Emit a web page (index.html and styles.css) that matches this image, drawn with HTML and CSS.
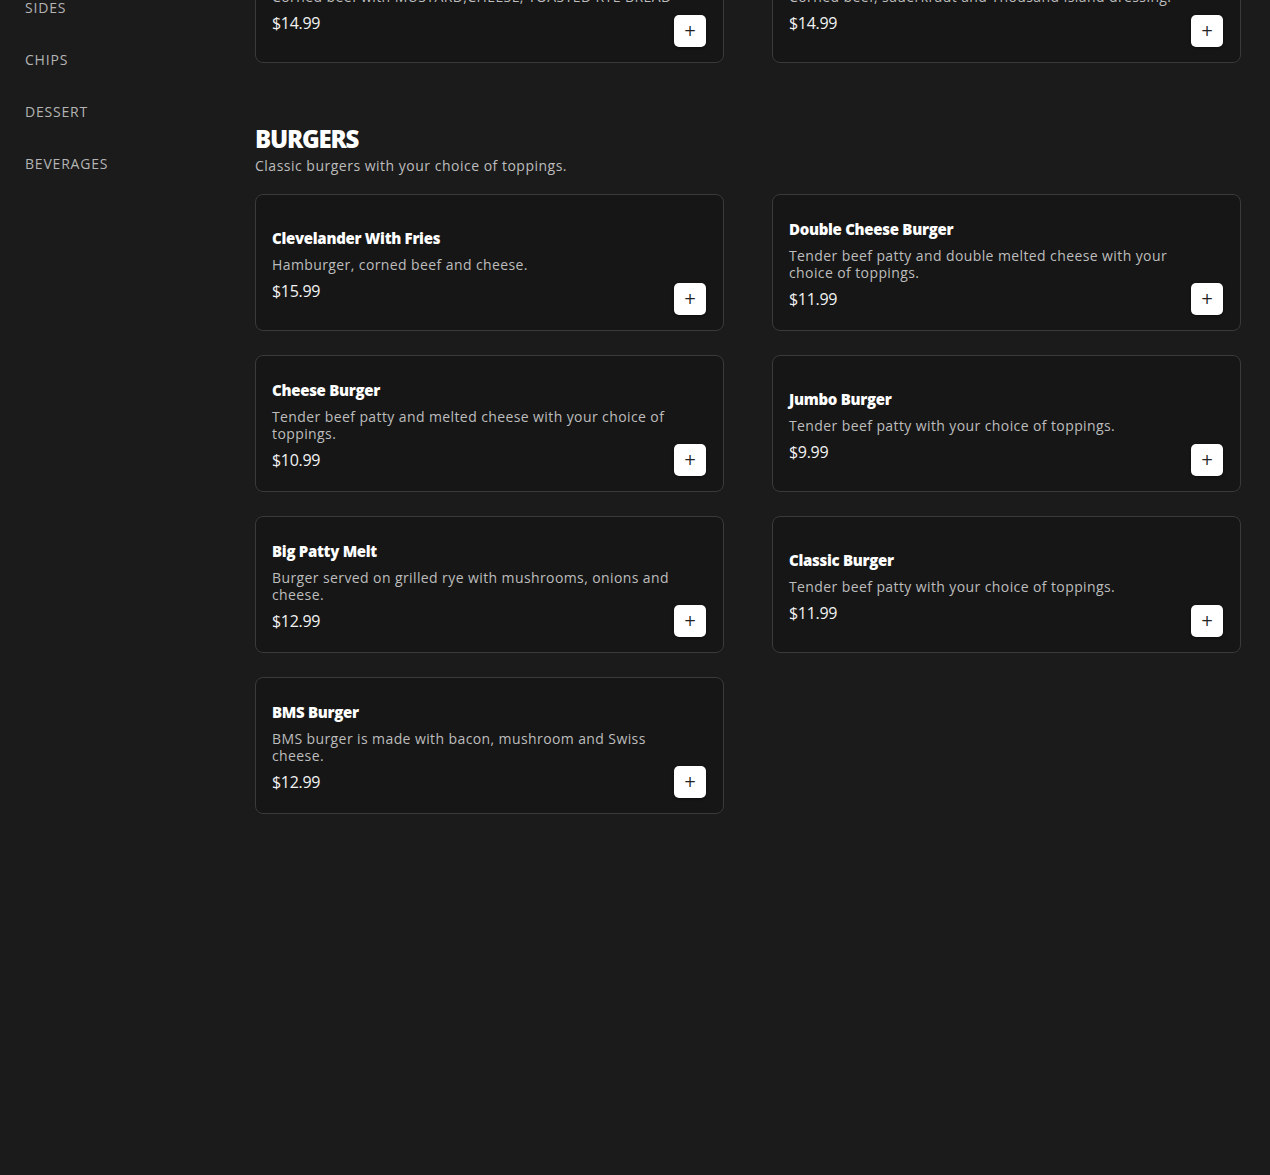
FILE: index.html
```html
<!DOCTYPE html>
<html lang="en">
<head>
  <meta charset="UTF-8" />
  <title>Menu</title>
  <link rel="stylesheet" href="styles.css">
</head>
<body>

<div class="page">
  <!-- category nav -->
  <nav class="sidebar">
    <a href="#">SIDES</a>
    <a href="#">CHIPS</a>
    <a href="#">DESSERT</a>
    <a href="#">BEVERAGES</a>
  </nav>

  <main class="menu">
    <!-- tail of the previous section (page is scrolled) -->
    <section class="section prev">
      <div class="grid">
        <div class="card">
          <div class="info">
            <h3>Reuben</h3>
            <p class="desc">Corned beef with MUSTARD,CHEESE, TOASTED RYE BREAD</p>
            <div class="price">$14.99</div>
          </div>
          <button class="add">+</button>
        </div>
        <div class="card">
          <div class="info">
            <h3>Reuben Classic</h3>
            <p class="desc">Corned beef, sauerkraut and Thousand Island dressing.</p>
            <div class="price">$14.99</div>
          </div>
          <button class="add">+</button>
        </div>
      </div>
    </section>

    <section class="section">
      <h2>BURGERS</h2>
      <p class="subtitle">Classic burgers with your choice of toppings.</p>
      <div class="grid">
        <div class="card">
          <div class="info">
            <h3>Clevelander With Fries</h3>
            <p class="desc">Hamburger, corned beef and cheese.</p>
            <div class="price">$15.99</div>
          </div>
          <button class="add">+</button>
        </div>
        <div class="card">
          <div class="info">
            <h3>Double Cheese Burger</h3>
            <p class="desc">Tender beef patty and double melted cheese with your choice of toppings.</p>
            <div class="price">$11.99</div>
          </div>
          <button class="add">+</button>
        </div>
        <div class="card">
          <div class="info">
            <h3>Cheese Burger</h3>
            <p class="desc">Tender beef patty and melted cheese with your choice of toppings.</p>
            <div class="price">$10.99</div>
          </div>
          <button class="add">+</button>
        </div>
        <div class="card">
          <div class="info">
            <h3>Jumbo Burger</h3>
            <p class="desc">Tender beef patty with your choice of toppings.</p>
            <div class="price">$9.99</div>
          </div>
          <button class="add">+</button>
        </div>
        <div class="card">
          <div class="info">
            <h3>Big Patty Melt</h3>
            <p class="desc">Burger served on grilled rye with mushrooms, onions and cheese.</p>
            <div class="price">$12.99</div>
          </div>
          <button class="add">+</button>
        </div>
        <div class="card">
          <div class="info">
            <h3>Classic Burger</h3>
            <p class="desc">Tender beef patty with your choice of toppings.</p>
            <div class="price">$11.99</div>
          </div>
          <button class="add">+</button>
        </div>
        <div class="card">
          <div class="info">
            <h3>BMS Burger</h3>
            <p class="desc">BMS burger is made with bacon, mushroom and Swiss cheese.</p>
            <div class="price">$12.99</div>
          </div>
          <button class="add">+</button>
        </div>
      </div>
    </section>
  </main>
</div>

</body>
</html>
```

FILE: styles.css
```css
body {
  margin: 0;
  background: #1b1b1b;
  color: #fff;
  font-family: 'Open Sans', sans-serif;
  overflow: hidden;
}

.page {
  display: flex;
  min-height: 1175px;
}

.sidebar {
  width: 230px;
  margin-top: -2px;
  padding: 0 0 0 25px;
  display: flex;
  flex-direction: column;
  align-self: flex-start;
  gap: 32px;
}

.sidebar a {
  color: #b4b4b4;
  text-decoration: none;
  font-size: 14px;
  line-height: 20px;
  letter-spacing: 0.8px;
}

.menu {
  width: 986px;
}

.section {
  margin-top: 61px;
}

.section.prev {
  margin-top: -74px;
}

.section h2 {
  margin: 0;
  font-size: 24px;
  line-height: 30px;
  font-weight: 800;
  letter-spacing: -1.2px;
}

.subtitle {
  margin: 2px 0 18px;
  font-size: 14px;
  line-height: 20px;
  color: #bdbdbd;
  letter-spacing: 0.5px;
}

.grid {
  display: grid;
  grid-template-columns: 1fr 1fr;
  column-gap: 48px;
  row-gap: 24px;
}

.card {
  height: 137px;
  box-sizing: border-box;
  border: 1px solid #3a3a3a;
  border-radius: 8px;
  background: #161616;
  padding: 18px 17px 15px 16px;
  display: flex;
  align-items: center;
}

.info {
  flex: 1;
}

.info h3 {
  margin: 0;
  font-size: 15px;
  line-height: 20px;
  font-weight: 800;
  letter-spacing: -0.3px;
}

.desc {
  margin: 8px 0 8px;
  font-size: 14px;
  line-height: 17px;
  color: #bdbdbd;
  letter-spacing: 0.4px;
}

.price {
  font-size: 16px;
  line-height: 20px;
  color: #f2f2f2;
  letter-spacing: -0.3px;
}

.add {
  align-self: flex-end;
  flex: none;
  width: 32px;
  height: 32px;
  border: none;
  border-radius: 5px;
  background: #fff;
  color: #222;
  font-family: 'DejaVu Sans', sans-serif;
  font-size: 15px;
  line-height: 32px;
  padding: 0;
  box-shadow: 0 1px 3px rgba(0, 0, 0, 0.5);
  cursor: pointer;
}
```
